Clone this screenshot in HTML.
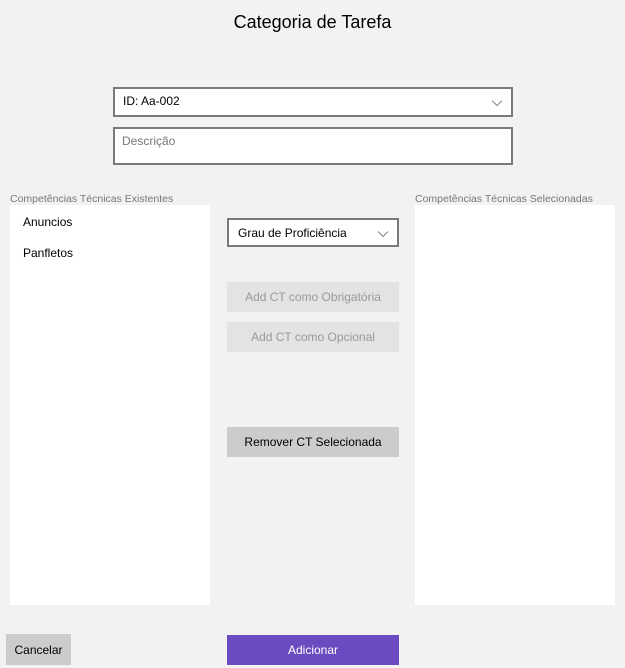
<!DOCTYPE html><html><head><style>
body{margin:0;width:625px;height:668px;background:#f2f2f2;font-family:"Liberation Sans",sans-serif;position:relative;overflow:hidden;font-size:12px;color:#000}
div{position:absolute;box-sizing:border-box}
.box{background:#fff;border:2px solid #7a7a7a}
.lbl{color:#777;font-size:10.5px}
.btn{text-align:center;font-size:12px}
.chev{position:absolute;right:8px;top:8px}
</style></head><body>
<div style="left:0;width:625px;top:12px;text-align:center;font-size:18px">Categoria de Tarefa</div>
<div class="box" style="left:113px;top:87px;width:400px;height:30px;padding:5px 8px;font-size:12px">ID: Aa-002
<svg class="chev" width="12" height="8" style="top:10px"><path d="M1 1.5l5 5 5-5" fill="none" stroke="#666" stroke-width="0.8"/></svg></div>
<div class="box" style="left:113px;top:127px;width:400px;height:38px;padding:5px 7px;color:#777">Descrição</div>
<div class="lbl" style="left:10px;top:193px">Competências Técnicas Existentes</div>
<div class="lbl" style="left:415px;top:193px">Competências Técnicas Selecionadas</div>
<div style="left:10px;top:205px;width:200px;height:400px;background:#fff">
<div style="left:13px;top:10px">Anuncios</div><div style="left:13px;top:41px">Panfletos</div></div>
<div style="left:415px;top:205px;width:200px;height:400px;background:#fff"></div>
<div class="box" style="left:227px;top:218px;width:172px;height:29px;padding:6px 9px">Grau de Proficiência
<svg class="chev" width="12" height="8" style="top:10px"><path d="M1 1.5l5 5 5-5" fill="none" stroke="#666" stroke-width="0.8"/></svg></div>
<div class="btn" style="left:227px;top:282px;width:172px;height:30px;line-height:30px;background:#e3e3e3;color:#999">Add CT como Obrigatória</div>
<div class="btn" style="left:227px;top:322px;width:172px;height:30px;line-height:31px;background:#e3e3e3;color:#999">Add CT como Opcional</div>
<div class="btn" style="left:227px;top:427px;width:172px;height:30px;line-height:31px;background:#ccc">Remover CT Selecionada</div>
<div class="btn" style="left:6px;top:634px;width:65px;height:31px;line-height:33px;background:#ccc">Cancelar</div>
<div class="btn" style="left:227px;top:635px;width:172px;height:30px;line-height:31px;background:#6b4bbf;color:#fff">Adicionar</div>
</body></html>
